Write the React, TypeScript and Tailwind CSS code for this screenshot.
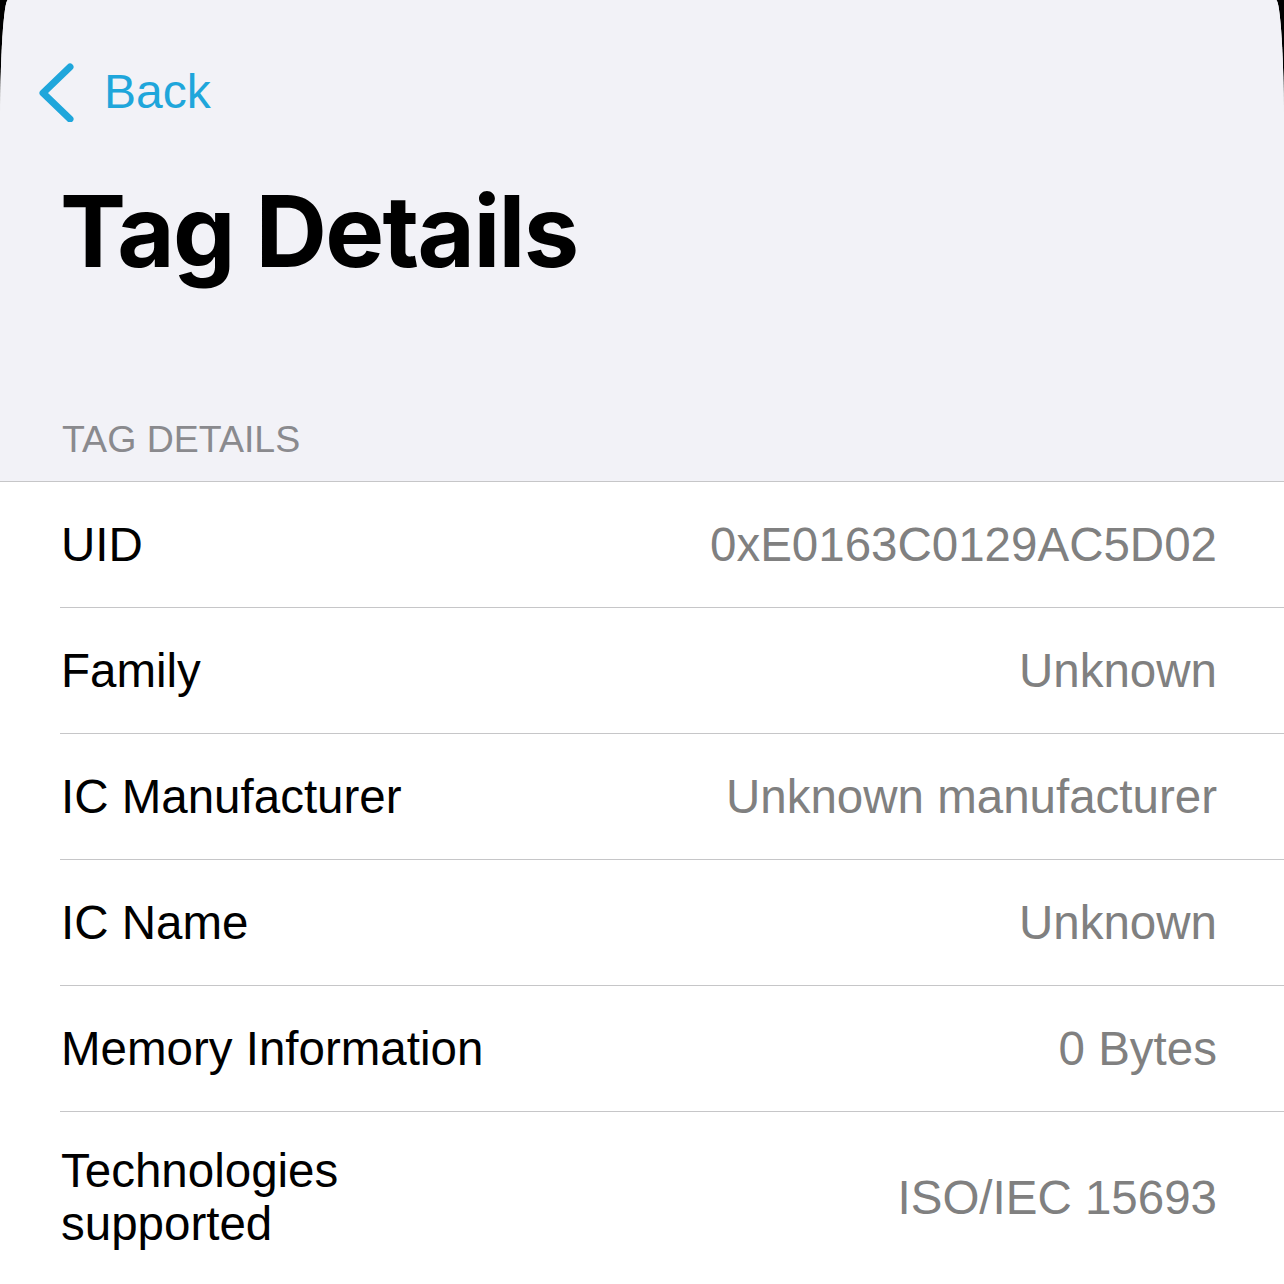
import React from "react";

const rows: { label: string; value: string }[] = [
  { label: "UID", value: "0xE0163C0129AC5D02" },
  { label: "Family", value: "Unknown" },
  { label: "IC Manufacturer", value: "Unknown manufacturer" },
  { label: "IC Name", value: "Unknown" },
  { label: "Memory Information", value: "0 Bytes" },
];

export default function App() {
  return (
    <div className="w-[1284px] h-[1284px] bg-black overflow-hidden">
      <div
        className="h-full bg-white rounded-t-[8px_130px] overflow-hidden"
        style={{ fontFamily: '"Liberation Sans", Arial, sans-serif' }}
      >
        <div className="h-[482px] bg-[#f2f2f7] border-b border-[#c6c6c8] flex flex-col">
          <div className="mt-[62px] h-[60px] flex items-center pl-[38px]">
            <svg width="40" height="60" viewBox="0 0 40 60" className="shrink-0">
              <path
                d="M32 5 L5 31 L32 57"
                fill="none"
                stroke="#1fa6db"
                strokeWidth="7"
                strokeLinecap="round"
                strokeLinejoin="round"
              />
            </svg>
            <span className="ml-[26px] text-[48px] leading-none text-[#1fa6db]">Back</span>
          </div>
          <h1
            className="mt-[60px] pl-[60px] text-[99px] leading-none font-bold text-black tracking-[-1.7px]"
            style={{ fontFamily: 'Inter, "Liberation Sans", sans-serif' }}
          >
            Tag Details
          </h1>
          <div className="mt-auto pl-[62px] pb-[23px] text-[37.5px] leading-none text-[#8a8a8e]">
            TAG DETAILS
          </div>
        </div>
        <div className="pl-[60px]">
          {rows.map((r) => (
            <div
              key={r.label}
              className="h-[126px] flex items-center justify-between pr-[67px] border-b border-[#c6c6c8] text-[47.5px] leading-[54px]"
            >
              <span className="pl-[1px] text-black">{r.label}</span>
              <span className="text-[#808080]">{r.value}</span>
            </div>
          ))}
          <div className="pt-[32px] pb-[36px] flex items-center justify-between pr-[67px] text-[47.5px] leading-[53px]">
            <span className="pl-[1px] w-[360px] text-black">Technologies supported</span>
            <span className="text-[#808080]">ISO/IEC 15693</span>
          </div>
        </div>
      </div>
    </div>
  );
}
